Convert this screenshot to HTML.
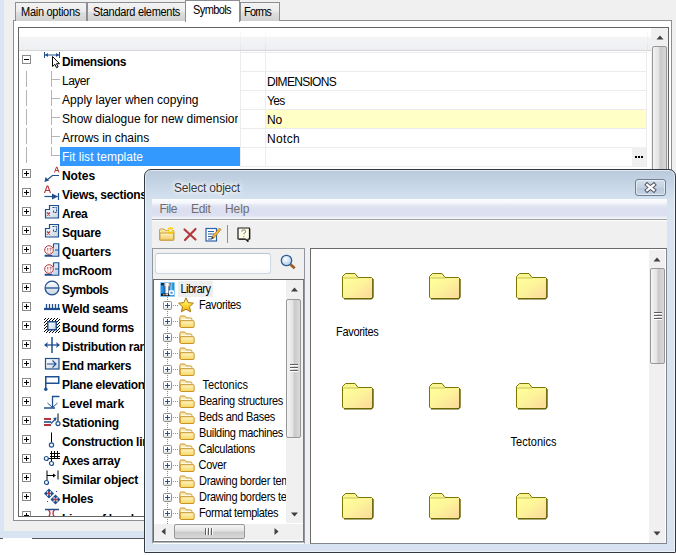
<!DOCTYPE html>
<html>
<head>
<meta charset="utf-8">
<title>Select object</title>
<style>
*{box-sizing:border-box;margin:0;padding:0}
html,body{width:676px;height:555px;overflow:hidden;background:#fff}
body{position:relative;font-family:"Liberation Sans",sans-serif;font-size:12px;color:#000}
.a{position:absolute}
.t{position:absolute;white-space:pre;line-height:16px;height:16px}
svg{position:absolute;overflow:visible}
.tab{position:absolute;top:2px;height:19px;border:1px solid #8c8e94;border-bottom:none;background:linear-gradient(#f3f3f3 0%,#ececec 45%,#dedede 55%,#d2d2d2 100%)}
.tab.sel{top:0;height:22px;background:#fff}
.pm{position:absolute;width:9px;height:9px;border:1px solid #8a8a8a;background:#fff}
.pm:before{content:"";position:absolute;left:1px;top:3px;width:5px;height:1px;background:#000}
.pm.p:after{content:"";position:absolute;left:3px;top:1px;width:1px;height:5px;background:#000}
.xp{position:absolute;width:9px;height:9px;border:1px solid #8f8f8f;border-radius:1.500px;background:linear-gradient(#fff 0%,#fff 55%,#dcdcdc 100%)}
.xp:before{content:"";position:absolute;left:1px;top:3px;width:5px;height:1px;background:#2b4aa0}
.xp:after{content:"";position:absolute;left:3px;top:1px;width:1px;height:5px;background:#2b4aa0}
.dv{position:absolute;width:1px;background-image:linear-gradient(#8c8c8c 50%,transparent 50%);background-size:1px 2px}
.dh{position:absolute;height:1px;background-image:linear-gradient(90deg,#8c8c8c 50%,transparent 50%);background-size:2px 1px}

</style>
</head>
<body>
<div class="a" style="left:0px;top:0px;width:676px;height:538px;background:#f0f0f0"></div>
<div class="a" style="left:0px;top:0px;width:4px;height:538px;background:#dbe5f3"></div>
<div class="a" style="left:0px;top:531px;width:676px;height:7px;background:#d9e4f2"></div>
<div class="a" style="left:0px;top:538px;width:3px;height:1px;background:#5a5a5a"></div>
<div class="a" style="left:32px;top:538px;width:120px;height:1px;background:#5a5a5a"></div>
<div class="a" style="left:13px;top:20px;width:659px;height:501px;border:1px solid #8c8e94;background:#fff"></div>
<div class="tab" style="left:15px;width:72px"></div>
<div class="tab" style="left:87px;width:99px"></div>
<div class="tab" style="left:240px;width:40px"></div>
<div class="tab sel" style="left:185px;width:55px"></div>
<div class="t" style="left:21px;top:4px;font-size:11px;letter-spacing:-0.28px;transform:scaleY(1.08);transform-origin:0 75%;">Main options</div>
<div class="t" style="left:93px;top:4px;font-size:11px;letter-spacing:-0.31px;transform:scaleY(1.08);transform-origin:0 75%;">Standard elements</div>
<div class="t" style="left:193px;top:2px;font-size:11px;letter-spacing:-0.60px;transform:scaleY(1.08);transform-origin:0 75%;">Symbols</div>
<div class="t" style="left:244px;top:4px;font-size:11px;letter-spacing:-0.83px;transform:scaleY(1.08);transform-origin:0 75%;">Forms</div>
<div class="a" style="left:18px;top:27px;width:651px;height:490px;border:1px solid #646464;background:#fff"></div>
<div class="a" style="left:19px;top:28px;width:633px;height:22px;background:linear-gradient(#fff 0%,#fff 38%,#f3f4f6 42%,#eeeff2 100%)"></div>
<div class="a" style="left:19px;top:50px;width:633px;height:1px;background:#d5d5d5"></div>
<div class="a" style="left:240px;top:28px;width:1px;height:22px;background:linear-gradient(#fff,#e2e3e6)"></div>
<div class="a" style="left:265px;top:28px;width:1px;height:22px;background:linear-gradient(#fff,#e2e3e6)"></div>
<div class="a" style="left:647px;top:28px;width:1px;height:22px;background:linear-gradient(#fff,#e2e3e6)"></div>
<div class="a" style="left:240px;top:52px;width:407px;height:1px;background:#ececec"></div>
<div class="a" style="left:240px;top:71px;width:407px;height:1px;background:#ececec"></div>
<div class="a" style="left:240px;top:90px;width:407px;height:1px;background:#ececec"></div>
<div class="a" style="left:240px;top:109px;width:407px;height:1px;background:#ececec"></div>
<div class="a" style="left:240px;top:128px;width:407px;height:1px;background:#ececec"></div>
<div class="a" style="left:240px;top:147px;width:407px;height:1px;background:#ececec"></div>
<div class="a" style="left:240px;top:166px;width:407px;height:1px;background:#ececec"></div>
<div class="a" style="left:240px;top:51px;width:1px;height:116px;background:#ececec"></div>
<div class="a" style="left:265px;top:51px;width:1px;height:116px;background:#ececec"></div>
<div class="a" style="left:646px;top:51px;width:1px;height:116px;background:#ececec"></div>
<div class="a" style="left:266px;top:110px;width:380px;height:18px;background:#ffffc6"></div>
<div class="a" style="left:60px;top:147px;width:180px;height:19px;background:#3399ff"></div>
<div class="a" style="left:632px;top:147px;width:14px;height:19px;background:#f0f0f0"></div>
<div class="a" style="left:635px;top:156px;width:2px;height:2px;background:#000"></div>
<div class="a" style="left:638px;top:156px;width:2px;height:2px;background:#000"></div>
<div class="a" style="left:641px;top:156px;width:2px;height:2px;background:#000"></div>
<div class="a" style="left:651px;top:28px;width:17px;height:488px;background:#f0f0f0"></div>
<svg style="left:652px;top:28px" width="16" height="18" viewBox="0 0 16 18"><path d="M4.500 11.500l3.500-4 3.500 4z" fill="#404040"/></svg>
<div class="a" style="left:652px;top:46px;width:15px;height:480px;border:1px solid #979797;border-radius:2px;background:linear-gradient(90deg,#f3f3f3 0%,#e2e2e2 45%,#c8c8c8 55%,#d8d8d8 100%)"></div>
<div class="a" style="left:26px;top:71px;width:1px;height:16px;background:#b4b4b4"></div>
<div class="a" style="left:51px;top:71px;width:1px;height:16px;background:#b4b4b4"></div>
<div class="a" style="left:51px;top:79px;width:9px;height:1px;background:#b4b4b4"></div>
<div class="a" style="left:26px;top:90px;width:1px;height:16px;background:#b4b4b4"></div>
<div class="a" style="left:51px;top:90px;width:1px;height:16px;background:#b4b4b4"></div>
<div class="a" style="left:51px;top:98px;width:9px;height:1px;background:#b4b4b4"></div>
<div class="a" style="left:26px;top:109px;width:1px;height:16px;background:#b4b4b4"></div>
<div class="a" style="left:51px;top:109px;width:1px;height:16px;background:#b4b4b4"></div>
<div class="a" style="left:51px;top:117px;width:9px;height:1px;background:#b4b4b4"></div>
<div class="a" style="left:26px;top:128px;width:1px;height:16px;background:#b4b4b4"></div>
<div class="a" style="left:51px;top:128px;width:1px;height:16px;background:#b4b4b4"></div>
<div class="a" style="left:51px;top:136px;width:9px;height:1px;background:#b4b4b4"></div>
<div class="a" style="left:26px;top:147px;width:1px;height:16px;background:#b4b4b4"></div>
<div class="a" style="left:51px;top:147px;width:1px;height:9px;background:#b4b4b4"></div>
<div class="a" style="left:51px;top:155px;width:9px;height:1px;background:#b4b4b4"></div>
<div class="a" style="left:19px;top:51px;width:221px;height:465px;overflow:hidden">
<div class="pm" style="left:3px;top:4px"></div>
<div class="t" style="left:43px;top:3px;font-size:12px;font-weight:bold;letter-spacing:-0.40px;">Dimensions</div>
<svg style="left:25px;top:1px" width="17" height="17" viewBox="0 0 17 17"><path d="M0.5 0v6M15.5 0v6M1 3h14" stroke="#1f4f8f" stroke-width="1" fill="none"/><path d="M1 3l3-2v4zM15 3l-3-2v4z" fill="#1f4f8f"/>
<path d="M8.5 4.5v10l2.4-2.2 1.6 3.4 1.6-.8-1.6-3.2h3z" fill="#fff" stroke="#000" stroke-width="1"/></svg>
<div class="t" style="left:43px;top:22px;font-size:12px;letter-spacing:-0.51px;">Layer</div>
<div class="t" style="left:43px;top:41px;font-size:12px;letter-spacing:0.02px;">Apply layer when copying</div>
<div class="t" style="left:43px;top:60px;font-size:12px;letter-spacing:-0.01px;width:176px;overflow:hidden;">Show dialogue for new dimension</div>
<div class="t" style="left:43px;top:79px;font-size:12px;letter-spacing:-0.06px;">Arrows in chains</div>
<div class="t" style="left:43px;top:98px;font-size:12px;letter-spacing:0.02px;color:#fff;">Fit list template</div>
<div class="pm p" style="left:3px;top:118px"></div>
<div class="t" style="left:43px;top:117px;font-size:12px;font-weight:bold;letter-spacing:-0.07px;">Notes</div>
<svg style="left:25px;top:115px" width="17" height="17" viewBox="0 0 17 17"><path d="M10.500 6.500L12.500 1h.5L15 6.500M11.300 4.500h2.900" stroke="#b5333a" stroke-width="1" fill="none"/>
<path d="M15 9.500h-6.500L3 14" stroke="#1f4f8f" stroke-width="1.200" fill="none"/><path d="M0.5 16l1-5 3.6 3.6z" fill="#1f4f8f"/></svg>
<div class="pm p" style="left:3px;top:137px"></div>
<div class="t" style="left:43px;top:136px;font-size:12px;font-weight:bold;letter-spacing:-0.30px;">Views, sections</div>
<svg style="left:25px;top:134px" width="17" height="17" viewBox="0 0 17 17"><path d="M0.5 8L3.1 1h.8L6.5 8M1.5 5.5h4" stroke="#b5333a" stroke-width="1.1" fill="none"/>
<path d="M0.5 11.5h13" stroke="#1f4f8f" stroke-width="1.2" fill="none"/><path d="M14 11.5l-6-3v6z" fill="#1f4f8f"/><path d="M14.5 8v7" stroke="#1f4f8f" stroke-width="1.2"/></svg>
<div class="pm p" style="left:3px;top:156px"></div>
<div class="t" style="left:43px;top:155px;font-size:12px;font-weight:bold;letter-spacing:-0.30px;">Area</div>
<svg style="left:25px;top:153px" width="17" height="17" viewBox="0 0 17 17"><defs><linearGradient id="ga" x1="0" y1="0" x2="1" y2="1"><stop offset="0" stop-color="#fff"/><stop offset="1" stop-color="#c9d6e3"/></linearGradient></defs>
<path d="M1.5 5.5h4v-4h9v12.5h-13z" fill="url(#ga)" stroke="#1f4f8f" stroke-width="1.2"/>
<path d="M3 8.5l3 3M6 8.5l-3 3" stroke="#b5333a" stroke-width="1.1"/>
<path d="M8.5 3.5h4v5h-3v-2" stroke="#1f4f8f" stroke-width="1" fill="none" stroke-dasharray="2 1"/></svg>
<div class="pm p" style="left:3px;top:175px"></div>
<div class="t" style="left:43px;top:174px;font-size:12px;font-weight:bold;letter-spacing:-0.28px;">Square</div>
<svg style="left:25px;top:172px" width="17" height="17" viewBox="0 0 17 17"><defs><linearGradient id="gb" x1="0" y1="0" x2="1" y2="1"><stop offset="0" stop-color="#fff"/><stop offset="1" stop-color="#c9d6e3"/></linearGradient></defs>
<path d="M1.5 5.5h4v-4h9v12.5h-13z" fill="url(#gb)" stroke="#1f4f8f" stroke-width="1.2"/>
<path d="M3 8.5l3 3M6 8.5l-3 3" stroke="#b5333a" stroke-width="1.1"/>
<path d="M8.5 3.5h4v5h-3v-2" stroke="#1f4f8f" stroke-width="1" fill="none" stroke-dasharray="2 1"/></svg>
<div class="pm p" style="left:3px;top:194px"></div>
<div class="t" style="left:43px;top:193px;font-size:12px;font-weight:bold;letter-spacing:-0.13px;">Quarters</div>
<svg style="left:25px;top:191px" width="17" height="17" viewBox="0 0 17 17"><defs><linearGradient id="gq1" x1="0" y1="0" x2="1" y2="1"><stop offset="0" stop-color="#fff"/><stop offset="1" stop-color="#b9cde6"/></linearGradient></defs>
<path d="M9.5 1.75h5.25v12.5h-13.5v-1h7" fill="url(#gq1)" stroke="#1f4f8f" stroke-width="1.2"/><path d="M9.5 1.75v4M11 8h3.5" stroke="#1f4f8f" stroke-width="1.2" fill="none"/>
<circle cx="5" cy="8" r="4.3" fill="#fff" stroke="#b5333a" stroke-width="1"/>
<path d="M3.8 6v2.6M3.8 9.6v.8M5.6 6.4q1.5-.9 1.6.4 0 .8-1 1.4v.5M6.2 9.7v.8" stroke="#b5333a" stroke-width=".9" fill="none"/></svg>
<div class="pm p" style="left:3px;top:213px"></div>
<div class="t" style="left:43px;top:212px;font-size:12px;font-weight:bold;letter-spacing:-0.27px;">mcRoom</div>
<svg style="left:25px;top:210px" width="17" height="17" viewBox="0 0 17 17"><defs><linearGradient id="gq2" x1="0" y1="0" x2="1" y2="1"><stop offset="0" stop-color="#fff"/><stop offset="1" stop-color="#b9cde6"/></linearGradient></defs>
<path d="M9.5 1.75h5.25v12.5h-13.5v-1h7" fill="url(#gq2)" stroke="#1f4f8f" stroke-width="1.2"/><path d="M9.5 1.75v4M11 8h3.5" stroke="#1f4f8f" stroke-width="1.2" fill="none"/>
<circle cx="5" cy="8" r="4.3" fill="#fff" stroke="#b5333a" stroke-width="1"/>
<path d="M3.8 6v2.6M3.8 9.6v.8M5.6 6.4q1.5-.9 1.6.4 0 .8-1 1.4v.5M6.2 9.7v.8" stroke="#b5333a" stroke-width=".9" fill="none"/></svg>
<div class="pm p" style="left:3px;top:232px"></div>
<div class="t" style="left:43px;top:231px;font-size:12px;font-weight:bold;letter-spacing:-0.57px;">Symbols</div>
<svg style="left:25px;top:229px" width="17" height="17" viewBox="0 0 17 17"><defs><linearGradient id="gs" x1="0" y1="0" x2="0" y2="1"><stop offset="0" stop-color="#fff"/><stop offset="1" stop-color="#c5d3e2"/></linearGradient></defs>
<circle cx="8" cy="8" r="6.9" fill="url(#gs)" stroke="#1f4f8f" stroke-width="1.3"/><path d="M1.5 8h13" stroke="#1f4f8f" stroke-width="1.3"/></svg>
<div class="pm p" style="left:3px;top:251px"></div>
<div class="t" style="left:43px;top:250px;font-size:12px;font-weight:bold;letter-spacing:-0.32px;">Weld seams</div>
<svg style="left:25px;top:247px" width="17" height="17" viewBox="0 0 17 17"><path d="M0 11h16" stroke="#1f4f8f" stroke-width="2.2"/><path d="M2.5 6v5M5.5 6v5M8.5 6v5M11.5 6v5M14.5 6v5" stroke="#1f4f8f" stroke-width="1.3"/></svg>
<div class="pm p" style="left:3px;top:270px"></div>
<div class="t" style="left:43px;top:269px;font-size:12px;font-weight:bold;letter-spacing:-0.24px;">Bound forms</div>
<svg style="left:25px;top:266px" width="17" height="17" viewBox="0 0 17 17"><defs><pattern id="ph" width="3" height="3" patternUnits="userSpaceOnUse"><path d="M-1 1l2-2M0 3l3-3M2 4l2-2" stroke="#000" stroke-width="1"/></pattern>
<linearGradient id="gbd" x1="0" y1="0" x2="1" y2="1"><stop offset="0" stop-color="#fff"/><stop offset="1" stop-color="#c5d3e2"/></linearGradient></defs>
<rect x="0" y="1" width="16" height="15" fill="url(#ph)"/><rect x="3.75" y="4.75" width="8.5" height="8" fill="url(#gbd)" stroke="#1f4f8f" stroke-width="1.5"/></svg>
<div class="pm p" style="left:3px;top:289px"></div>
<div class="t" style="left:43px;top:288px;font-size:12px;font-weight:bold;letter-spacing:-0.30px;">Distribution range</div>
<svg style="left:25px;top:286px" width="17" height="17" viewBox="0 0 17 17"><path d="M8 0v16" stroke="#1f4f8f" stroke-width="1.5"/><path d="M1 8h14" stroke="#1f4f8f" stroke-width="1.3"/><path d="M0 8l4-3-1 3 1 3zM16 8l-4-3 1 3-1 3z" fill="#1f4f8f"/></svg>
<div class="pm p" style="left:3px;top:308px"></div>
<div class="t" style="left:43px;top:307px;font-size:12px;font-weight:bold;letter-spacing:-0.34px;">End markers</div>
<svg style="left:25px;top:305px" width="17" height="17" viewBox="0 0 17 17"><defs><linearGradient id="ge" x1="0" y1="0" x2="1" y2="1"><stop offset="0" stop-color="#fff"/><stop offset="1" stop-color="#c9d6e3"/></linearGradient></defs>
<rect x="1.5" y="2.5" width="13.5" height="10.5" fill="url(#ge)" stroke="#1f4f8f" stroke-width="1.2"/><path d="M3 8h9M8.5 4.5l3.5 3.5-3.5 3.5" stroke="#1f4f8f" stroke-width="1.1" fill="none"/></svg>
<div class="pm p" style="left:3px;top:327px"></div>
<div class="t" style="left:43px;top:326px;font-size:12px;font-weight:bold;letter-spacing:-0.30px;">Plane elevation</div>
<svg style="left:25px;top:324px" width="17" height="17" viewBox="0 0 17 17"><path d="M1.75 13v-11.25h13v6.5h-13" stroke="#1f4f8f" stroke-width="1.5" fill="none"/><circle cx="1.8" cy="14.3" r="1.7" fill="#1f4f8f"/></svg>
<div class="pm p" style="left:3px;top:346px"></div>
<div class="t" style="left:43px;top:345px;font-size:12px;font-weight:bold;letter-spacing:-0.07px;">Level mark</div>
<svg style="left:25px;top:343px" width="17" height="17" viewBox="0 0 17 17"><path d="M15.5 2.5h-7v11" stroke="#1f4f8f" stroke-width="1.3" fill="none"/><path d="M3.5 9l5 4.5 5-4.5" stroke="#1f4f8f" stroke-width="1" fill="none"/><path d="M0 14h11" stroke="#1f4f8f" stroke-width="1.5"/></svg>
<div class="pm p" style="left:3px;top:365px"></div>
<div class="t" style="left:43px;top:364px;font-size:12px;font-weight:bold;letter-spacing:-0.17px;">Stationing</div>
<svg style="left:25px;top:362px" width="17" height="17" viewBox="0 0 17 17"><path d="M0 6h7M0 12h7" stroke="#b5333a" stroke-width="2"/><path d="M0 9h7" stroke="#1f4f8f" stroke-width="1.6"/>
<path d="M7 10.5l5-5" stroke="#1f4f8f" stroke-width="1.2"/><path d="M12.5 4.5l-3.5.6 2.9 2.9z" fill="#1f4f8f"/>
<path d="M14 0.5v8" stroke="#000" stroke-width="1"/><circle cx="14" cy="10.6" r="2" fill="#fff" stroke="#1f4f8f" stroke-width="1.2"/></svg>
<div class="pm p" style="left:3px;top:384px"></div>
<div class="t" style="left:43px;top:383px;font-size:12px;font-weight:bold;letter-spacing:-0.30px;">Construction line</div>
<svg style="left:25px;top:381px" width="17" height="17" viewBox="0 0 17 17"><path d="M7.5 0.5v10" stroke="#000" stroke-width="1"/><circle cx="7.5" cy="13" r="2.1" fill="#fff" stroke="#1f4f8f" stroke-width="1.2"/></svg>
<div class="pm p" style="left:3px;top:403px"></div>
<div class="t" style="left:43px;top:402px;font-size:12px;font-weight:bold;letter-spacing:-0.34px;">Axes array</div>
<svg style="left:25px;top:400px" width="17" height="17" viewBox="0 0 17 17"><path d="M7.5 0v8M10.5 0v8M13.5 0v8M6 2.5h10M6 5.5h10M3 7.5h13M7.5 8v3" stroke="#000" stroke-width="1"/>
<circle cx="2.3" cy="7.5" r="2" fill="#fff" stroke="#1f4f8f" stroke-width="1.2"/><circle cx="7.5" cy="12.5" r="2" fill="#fff" stroke="#1f4f8f" stroke-width="1.2"/></svg>
<div class="pm p" style="left:3px;top:422px"></div>
<div class="t" style="left:43px;top:421px;font-size:12px;font-weight:bold;letter-spacing:-0.19px;">Similar object</div>
<svg style="left:25px;top:419px" width="17" height="17" viewBox="0 0 17 17"><path d="M3 0.5v10M14 0.5v9M3 5.5h8" stroke="#000" stroke-width="1"/><path d="M12 5.5l-3-2v4z" fill="#000"/><circle cx="2.5" cy="12.5" r="2" fill="#fff" stroke="#1f4f8f" stroke-width="1.2"/></svg>
<div class="pm p" style="left:3px;top:441px"></div>
<div class="t" style="left:43px;top:440px;font-size:12px;font-weight:bold;letter-spacing:-0.34px;">Holes</div>
<svg style="left:25px;top:438px" width="17" height="17" viewBox="0 0 17 17"><path d="M5 -0.5l5 5-5 5-5-5z" fill="#1f4f8f"/><path d="M11.5 5.5l5 5-5 5-5-5z" fill="#1f4f8f"/>
<path d="M3 2.5l4 4M7 2.5l-4 4M9.5 8.5l4 4M13.5 8.5l-4 4" stroke="#fff" stroke-width="1.2"/><path d="M4 3.5l2 2M6 3.5l-2 2M10.5 9.5l2 2M12.500 9.5l-2 2" stroke="#b5333a" stroke-width="1.5"/>
<rect x="12" y="2" width="1" height="1" fill="#1f4f8f"/><rect x="3" y="12" width="1" height="1" fill="#1f4f8f"/></svg>
<div class="pm p" style="left:3px;top:460px"></div>
<div class="t" style="left:43px;top:460px;font-size:12px;font-weight:bold;letter-spacing:-0.30px;">Lines of level</div>
<svg style="left:25px;top:457px" width="17" height="17" viewBox="0 0 17 17"><path d="M1 1.500h14" stroke="#1f4f8f" stroke-width="1.500"/><path d="M4.5 2q3 3 0 7M10.5 2q-3 3 0 7" stroke="#b5333a" stroke-width="1.3" fill="none"/></svg>
</div>
<div class="t" style="left:267px;top:74px;font-size:12px;letter-spacing:-0.70px;">DIMENSIONS</div>
<div class="t" style="left:267px;top:93px;font-size:12px;letter-spacing:-0.69px;">Yes</div>
<div class="t" style="left:267px;top:112px;font-size:12px;letter-spacing:-0.17px;">No</div>
<div class="t" style="left:267px;top:131px;font-size:12px;letter-spacing:0.33px;">Notch</div>
<div class="a" style="left:144px;top:169px;width:532px;height:384px;border:1px solid #333942;border-radius:7px 7px 1px 1px;background:linear-gradient(#b9c9db 0px,#c6d5e6 14px,#d3e0ee 28px,#d8e4f1 40px,#d7e3f0 100%);box-shadow:inset 0 0 0 1px rgba(255,255,255,.55)"></div>
<div class="t" style="left:174px;top:180px;font-size:12px;letter-spacing:-0.21px;color:#3b3b3b;text-shadow:0 0 6px #fff,0 0 6px #fff,0 0 3px #fff;">Select object</div>
<div class="a" style="left:635px;top:179px;width:31px;height:17px;border:1px solid #6f7f93;border-radius:3px;background:linear-gradient(#d4dfec,#c3d1e2 50%,#b7c7db 51%,#c6d4e4);box-shadow:inset 0 0 0 1px rgba(255,255,255,.5)"></div>
<svg style="left:645px;top:183px" width="11" height="9" viewBox="0 0 11 9"><path d="M2.200 1.800l6.600 5.400M8.800 1.800l-6.600 5.400" stroke="#505662" stroke-width="4.200" stroke-linecap="square"/><path d="M2.200 1.800l6.600 5.400M8.800 1.800l-6.600 5.400" stroke="#fff" stroke-width="2.300" stroke-linecap="square"/></svg>
<div class="a" style="left:152px;top:199px;width:515px;height:345px;background:#f0f0f0"></div>
<div class="a" style="left:152px;top:199px;width:515px;height:20px;background:linear-gradient(#fdfdfe 0%,#f4f6fb 20%,#e4e7f3 32%,#dcdfef 50%,#dde0f0 82%,#f1f2f8 95%,#f6f6fa 100%)"></div>
<div class="t" style="left:159.5px;top:200.5px;font-size:12px;letter-spacing:-0.46px;color:#6d6d6d;">File</div>
<div class="t" style="left:191px;top:200.5px;font-size:12px;letter-spacing:-0.30px;color:#6d6d6d;">Edit</div>
<div class="t" style="left:225px;top:200.5px;font-size:12px;letter-spacing:-0.05px;color:#6d6d6d;">Help</div>
<div class="a" style="left:152px;top:219px;width:515px;height:1px;background:#a0a0a0"></div>
<div class="a" style="left:152px;top:220px;width:515px;height:1px;background:#fff"></div>
<svg style="left:159px;top:227px" width="16" height="14" viewBox="0 0 16 14"><defs><linearGradient id="tf" x1="0" y1="0" x2="0" y2="1"><stop offset="0" stop-color="#fdf3c2"/><stop offset="1" stop-color="#f2cc62"/></linearGradient></defs>
<path d="M.5 12.500v-9.500q0-1 1-1h3.500l1.500 1.500h7.500q1 0 1 1v8q0 .8-.8.8h-13q-.7 0-.7-.8z" fill="#f9e49a" stroke="#c9a24a"/>
<path d="M1 6h13.500v6.500q0 .5-.5.500h-12.500q-.5 0-.5-.5z" fill="url(#tf)" stroke="#c9a24a"/>
<path d="M11.500 0v7M8 3.500h7M9 1l5 5M14 1l-5 5" stroke="#f6c400" stroke-width="1.100"/><circle cx="11.500" cy="3.500" r="1.300" fill="#fffbe0"/></svg>
<svg style="left:183px;top:228px" width="14" height="13" viewBox="0 0 14 13"><path d="M1.500 1.500l11 10M12.500 1l-10.500 11" stroke="#b23a3e" stroke-width="2.200" stroke-linecap="round"/></svg>
<svg style="left:205px;top:227px" width="16" height="15" viewBox="0 0 16 15"><rect x="1" y="1.500" width="10.500" height="12.500" fill="#fff" stroke="#2e62a8" stroke-width="1.200"/>
<path d="M3 4.500h6M3 7h6M3 9.500h5M3 12h4" stroke="#2e62a8" stroke-width="1.100"/>
<path d="M14.500 1l1.500 1.500-7 8.500-2.500 1 .6-2.600z" fill="#f2b632" stroke="#9a6a1a" stroke-width=".6"/><path d="M6.500 12l.6-2.600 1.900 1.600z" fill="#333"/></svg>
<div class="a" style="left:227px;top:225px;width:1px;height:18px;background:#8e8e8e"></div>
<svg style="left:237px;top:227px" width="14" height="15" viewBox="0 0 14 15"><path d="M1 1h11.500v11h-1.500v2.500l-2.500-2.500h-7.500z" fill="#fffde6" stroke="#1a1a1a" stroke-width="1.200" stroke-linejoin="round"/><path d="M12.800 2v10.300M2 12.300h6" stroke="#1a1a1a" stroke-width="1"/>
<path d="M4.800 4.800q0-1.900 2-1.900 1.900 0 1.900 1.500 0 1-1.200 1.700-.7.500-.7 1.300M6.800 9v1.200" stroke="#9a9a9a" stroke-width="1.100" fill="none"/></svg>
<div class="a" style="left:152px;top:248px;width:153px;height:296px;border:1px solid #92979f;border-bottom-color:#fff;background:#f0f0f0"></div>
<div class="a" style="left:155px;top:253px;width:116px;height:21px;border:1px solid #cfd8e3;border-top-color:#b9c4d2;border-radius:3px;background:linear-gradient(#fff,#fff 70%,#f6f8fb)"></div>
<svg style="left:280px;top:254px" width="17" height="17" viewBox="0 0 17 17"><defs><radialGradient id="mg" cx=".4" cy=".35" r=".7"><stop offset="0" stop-color="#fff"/><stop offset="1" stop-color="#a9c9ea"/></radialGradient></defs>
<path d="M10.500 10.500l4.200 3.800" stroke="#a45c1e" stroke-width="2.800" stroke-linecap="butt"/><circle cx="6.500" cy="6.500" r="5.200" fill="url(#mg)" stroke="#2f5f92" stroke-width="1.300"/></svg>
<div class="a" style="left:153px;top:279px;width:151px;height:264px;background:#b4b8be"></div>
<div class="a" style="left:153px;top:279px;width:151px;height:263px;border:1px solid #767c86;border-top-color:#6b6b6b;border-left-color:#6b6b6b;background:#fff"></div>
<div class="a" style="left:286px;top:280px;width:17px;height:243px;background:#f0f0f0"></div>
<svg style="left:286px;top:281px" width="17" height="17" viewBox="0 0 17 17"><path d="M5 10.500l3.500-4 3.500 4z" fill="#404040"/></svg>
<svg style="left:286px;top:506px" width="17" height="17" viewBox="0 0 17 17"><path d="M5 6.500l3.500 4 3.500-4z" fill="#404040"/></svg>
<div class="a" style="left:286px;top:299px;width:15px;height:139px;border:1px solid #979797;border-radius:2px;background:linear-gradient(90deg,#f4f4f4 0%,#e3e3e3 45%,#cacaca 55%,#d9d9d9 100%)"></div>
<div class="a" style="left:290px;top:364px;width:8px;height:1px;background:#5e5e5e"></div>
<div class="a" style="left:290px;top:365px;width:8px;height:1px;background:#fff"></div>
<div class="a" style="left:290px;top:367px;width:8px;height:1px;background:#5e5e5e"></div>
<div class="a" style="left:290px;top:368px;width:8px;height:1px;background:#fff"></div>
<div class="a" style="left:290px;top:370px;width:8px;height:1px;background:#5e5e5e"></div>
<div class="a" style="left:290px;top:371px;width:8px;height:1px;background:#fff"></div>
<div class="a" style="left:154px;top:524px;width:149px;height:16px;background:#f0f0f0"></div>
<svg style="left:155.3px;top:522.7px" width="17" height="17" viewBox="0 0 17 17"><path d="M10.500 5l-4 3.500 4 3.500z" fill="#404040"/></svg>
<svg style="left:267.5px;top:522.7px" width="17" height="17" viewBox="0 0 17 17"><path d="M6.500 5l4 3.500-4 3.500z" fill="#404040"/></svg>
<div class="a" style="left:174px;top:524px;width:71px;height:15px;border:1px solid #979797;border-radius:2px;background:linear-gradient(#f4f4f4 0%,#e3e3e3 45%,#cacaca 55%,#d9d9d9 100%)"></div>
<div class="a" style="left:205px;top:528px;width:1px;height:7px;background:#5e5e5e"></div>
<div class="a" style="left:206px;top:528px;width:1px;height:7px;background:#fff"></div>
<div class="a" style="left:208px;top:528px;width:1px;height:7px;background:#5e5e5e"></div>
<div class="a" style="left:209px;top:528px;width:1px;height:7px;background:#fff"></div>
<div class="a" style="left:211px;top:528px;width:1px;height:7px;background:#5e5e5e"></div>
<div class="a" style="left:212px;top:528px;width:1px;height:7px;background:#fff"></div>
<div class="a" style="left:154px;top:280px;width:132px;height:244px;overflow:hidden">
<svg style="left:6px;top:2px" width="15" height="15" viewBox="0 0 15 15"><defs><linearGradient id="lc" x1="0" y1="0" x2="1" y2="0"><stop offset="0" stop-color="#4a4a4a"/><stop offset=".35" stop-color="#f4f4f4"/><stop offset=".7" stop-color="#fff"/><stop offset="1" stop-color="#8a8a8a"/></linearGradient></defs>
<rect x="0" y="0" width="15" height="15" fill="#1b78d4"/>
<rect x="1" y="1" width="10" height="2.500" fill="#16283a"/>
<rect x="1" y="3.500" width="2" height="8" fill="#2a95e6"/>
<rect x="3.500" y="1" width="6.500" height="3.500" rx="1" fill="url(#lc)"/>
<rect x="4.700" y="4" width="4" height="7.500" fill="url(#lc)"/>
<rect x="1" y="11.500" width="9" height="2.800" fill="#1c1c1c"/><rect x="3" y="12" width="1.500" height="1.500" fill="#9a9a9a"/><rect x="5.500" y="11.700" width="2.500" height="1.500" fill="#d8d8d8"/>
<rect x="10.600" y="1" width="1.100" height="8" fill="#fff"/><rect x="11.700" y="1" width="2.500" height="8" fill="#138a9a"/><rect x="12.300" y="1" width="1.100" height="8" fill="#3aa6f0"/>
<rect x="9" y="8.300" width="5" height="5" rx="1" fill="#fff"/><rect x="10.500" y="9.800" width="2" height="2" fill="#2a8cf0"/>
<rect x=".4" y=".4" width="14.200" height="14.200" fill="none" stroke="#a6dbff" stroke-width=".8"/></svg>
<div class="a" style="left:24px;top:1px;width:35px;height:16px;background:#eeeeee"></div>
<div class="t" style="left:26.5px;top:1px;font-size:11px;letter-spacing:-0.52px;transform:scaleY(1.12);transform-origin:0 75%;">Library</div>
<div class="dv" style="left:13px;top:17px;height:230px"></div>
<div class="dh" style="left:19px;top:25px;width:6px"></div>
<div class="xp" style="left:9px;top:21px"></div>
<svg style="left:24px;top:16.5px" width="16" height="15" viewBox="0 0 16 15"><defs><linearGradient id="st" x1="0" y1="0" x2="0" y2="1"><stop offset="0" stop-color="#fffbd0"/><stop offset=".45" stop-color="#ffe23a"/><stop offset="1" stop-color="#eea412"/></linearGradient></defs>
<path d="M8 .8l2.200 4.800 5.200.6-3.900 3.500 1.100 5.100-4.600-2.600-4.600 2.600 1.100-5.100-3.900-3.500 5.200-.6z" fill="url(#st)" stroke="#a67a18" stroke-width="1" stroke-linejoin="round"/></svg>
<div class="t" style="left:45px;top:17px;font-size:11px;letter-spacing:-0.36px;transform:scaleY(1.12);transform-origin:0 75%;">Favorites</div>
<div class="dh" style="left:19px;top:41px;width:6px"></div>
<div class="xp" style="left:9px;top:37px"></div>
<svg style="left:25px;top:34.5px" width="16" height="14" viewBox="0 0 16 14"><defs><linearGradient id="sf1" x1="0" y1="0" x2="0" y2="1"><stop offset="0" stop-color="#fff6c4"/><stop offset="1" stop-color="#f8d660"/></linearGradient></defs>
<path d="M.8 11.500v-9q0-1.500 1.500-1.500h3q.9 0 1.500.9l.8 1.100h4.400q.800 0 .800.800v8z" fill="#fbe8a4" stroke="#c9922a" stroke-width="1"/>
<path d="M2.500 3.800h9.800v2.500h-9.800z" fill="#fffdf2"/>
<path d="M1.300 5.700h12.900q.900 0 .900.900v5q0 .900-.900.900h-12q-.900 0-.900-.900z" fill="url(#sf1)" stroke="#c9922a" stroke-width="1"/></svg>
<div class="dh" style="left:19px;top:57px;width:6px"></div>
<div class="xp" style="left:9px;top:53px"></div>
<svg style="left:25px;top:50.5px" width="16" height="14" viewBox="0 0 16 14"><defs><linearGradient id="sf2" x1="0" y1="0" x2="0" y2="1"><stop offset="0" stop-color="#fff6c4"/><stop offset="1" stop-color="#f8d660"/></linearGradient></defs>
<path d="M.8 11.500v-9q0-1.500 1.500-1.500h3q.9 0 1.500.9l.8 1.100h4.400q.800 0 .800.800v8z" fill="#fbe8a4" stroke="#c9922a" stroke-width="1"/>
<path d="M2.500 3.800h9.800v2.500h-9.800z" fill="#fffdf2"/>
<path d="M1.300 5.700h12.900q.900 0 .900.900v5q0 .900-.900.900h-12q-.900 0-.900-.900z" fill="url(#sf2)" stroke="#c9922a" stroke-width="1"/></svg>
<div class="dh" style="left:19px;top:73px;width:6px"></div>
<div class="xp" style="left:9px;top:69px"></div>
<svg style="left:25px;top:66.5px" width="16" height="14" viewBox="0 0 16 14"><defs><linearGradient id="sf3" x1="0" y1="0" x2="0" y2="1"><stop offset="0" stop-color="#fff6c4"/><stop offset="1" stop-color="#f8d660"/></linearGradient></defs>
<path d="M.8 11.500v-9q0-1.500 1.500-1.500h3q.9 0 1.500.9l.8 1.100h4.400q.800 0 .800.800v8z" fill="#fbe8a4" stroke="#c9922a" stroke-width="1"/>
<path d="M2.500 3.800h9.800v2.500h-9.800z" fill="#fffdf2"/>
<path d="M1.300 5.700h12.900q.900 0 .900.900v5q0 .900-.900.900h-12q-.900 0-.900-.900z" fill="url(#sf3)" stroke="#c9922a" stroke-width="1"/></svg>
<div class="dh" style="left:19px;top:89px;width:6px"></div>
<div class="xp" style="left:9px;top:85px"></div>
<svg style="left:25px;top:82.5px" width="16" height="14" viewBox="0 0 16 14"><defs><linearGradient id="sf4" x1="0" y1="0" x2="0" y2="1"><stop offset="0" stop-color="#fff6c4"/><stop offset="1" stop-color="#f8d660"/></linearGradient></defs>
<path d="M.8 11.500v-9q0-1.500 1.500-1.500h3q.9 0 1.500.9l.8 1.100h4.400q.800 0 .800.800v8z" fill="#fbe8a4" stroke="#c9922a" stroke-width="1"/>
<path d="M2.500 3.800h9.800v2.500h-9.800z" fill="#fffdf2"/>
<path d="M1.300 5.700h12.900q.900 0 .900.900v5q0 .900-.900.900h-12q-.900 0-.900-.900z" fill="url(#sf4)" stroke="#c9922a" stroke-width="1"/></svg>
<div class="dh" style="left:19px;top:105px;width:6px"></div>
<div class="xp" style="left:9px;top:101px"></div>
<svg style="left:25px;top:98.5px" width="16" height="14" viewBox="0 0 16 14"><defs><linearGradient id="sf5" x1="0" y1="0" x2="0" y2="1"><stop offset="0" stop-color="#fff6c4"/><stop offset="1" stop-color="#f8d660"/></linearGradient></defs>
<path d="M.8 11.500v-9q0-1.500 1.500-1.500h3q.9 0 1.500.9l.8 1.100h4.400q.800 0 .800.800v8z" fill="#fbe8a4" stroke="#c9922a" stroke-width="1"/>
<path d="M2.500 3.800h9.800v2.500h-9.800z" fill="#fffdf2"/>
<path d="M1.300 5.700h12.900q.900 0 .900.900v5q0 .900-.900.900h-12q-.900 0-.900-.900z" fill="url(#sf5)" stroke="#c9922a" stroke-width="1"/></svg>
<div class="t" style="left:48.5px;top:97px;font-size:11px;letter-spacing:-0.04px;transform:scaleY(1.12);transform-origin:0 75%;">Tectonics</div>
<div class="dh" style="left:19px;top:121px;width:6px"></div>
<div class="xp" style="left:9px;top:117px"></div>
<svg style="left:25px;top:114.5px" width="16" height="14" viewBox="0 0 16 14"><defs><linearGradient id="sf6" x1="0" y1="0" x2="0" y2="1"><stop offset="0" stop-color="#fff6c4"/><stop offset="1" stop-color="#f8d660"/></linearGradient></defs>
<path d="M.8 11.500v-9q0-1.500 1.500-1.500h3q.9 0 1.500.9l.8 1.100h4.400q.800 0 .800.800v8z" fill="#fbe8a4" stroke="#c9922a" stroke-width="1"/>
<path d="M2.500 3.800h9.800v2.500h-9.800z" fill="#fffdf2"/>
<path d="M1.300 5.700h12.900q.900 0 .900.900v5q0 .900-.900.900h-12q-.900 0-.900-.900z" fill="url(#sf6)" stroke="#c9922a" stroke-width="1"/></svg>
<div class="t" style="left:45px;top:113px;font-size:11px;letter-spacing:-0.29px;transform:scaleY(1.12);transform-origin:0 75%;">Bearing structures</div>
<div class="dh" style="left:19px;top:137px;width:6px"></div>
<div class="xp" style="left:9px;top:133px"></div>
<svg style="left:25px;top:130.5px" width="16" height="14" viewBox="0 0 16 14"><defs><linearGradient id="sf7" x1="0" y1="0" x2="0" y2="1"><stop offset="0" stop-color="#fff6c4"/><stop offset="1" stop-color="#f8d660"/></linearGradient></defs>
<path d="M.8 11.500v-9q0-1.500 1.500-1.500h3q.9 0 1.500.9l.8 1.100h4.400q.800 0 .800.800v8z" fill="#fbe8a4" stroke="#c9922a" stroke-width="1"/>
<path d="M2.500 3.800h9.800v2.500h-9.800z" fill="#fffdf2"/>
<path d="M1.300 5.700h12.900q.900 0 .900.900v5q0 .900-.900.900h-12q-.900 0-.900-.900z" fill="url(#sf7)" stroke="#c9922a" stroke-width="1"/></svg>
<div class="t" style="left:45px;top:129px;font-size:11px;letter-spacing:-0.29px;transform:scaleY(1.12);transform-origin:0 75%;">Beds and Bases</div>
<div class="dh" style="left:19px;top:153px;width:6px"></div>
<div class="xp" style="left:9px;top:149px"></div>
<svg style="left:25px;top:146.5px" width="16" height="14" viewBox="0 0 16 14"><defs><linearGradient id="sf8" x1="0" y1="0" x2="0" y2="1"><stop offset="0" stop-color="#fff6c4"/><stop offset="1" stop-color="#f8d660"/></linearGradient></defs>
<path d="M.8 11.500v-9q0-1.500 1.500-1.500h3q.9 0 1.500.9l.8 1.100h4.400q.800 0 .800.800v8z" fill="#fbe8a4" stroke="#c9922a" stroke-width="1"/>
<path d="M2.500 3.800h9.800v2.500h-9.800z" fill="#fffdf2"/>
<path d="M1.300 5.700h12.900q.900 0 .900.900v5q0 .900-.900.900h-12q-.900 0-.900-.900z" fill="url(#sf8)" stroke="#c9922a" stroke-width="1"/></svg>
<div class="t" style="left:45px;top:145px;font-size:11px;letter-spacing:-0.31px;transform:scaleY(1.12);transform-origin:0 75%;">Building machines</div>
<div class="dh" style="left:19px;top:169px;width:6px"></div>
<div class="xp" style="left:9px;top:165px"></div>
<svg style="left:25px;top:162.5px" width="16" height="14" viewBox="0 0 16 14"><defs><linearGradient id="sf9" x1="0" y1="0" x2="0" y2="1"><stop offset="0" stop-color="#fff6c4"/><stop offset="1" stop-color="#f8d660"/></linearGradient></defs>
<path d="M.8 11.500v-9q0-1.500 1.500-1.500h3q.9 0 1.500.9l.8 1.100h4.400q.800 0 .800.800v8z" fill="#fbe8a4" stroke="#c9922a" stroke-width="1"/>
<path d="M2.500 3.800h9.800v2.500h-9.800z" fill="#fffdf2"/>
<path d="M1.300 5.700h12.900q.900 0 .900.900v5q0 .900-.900.900h-12q-.900 0-.900-.900z" fill="url(#sf9)" stroke="#c9922a" stroke-width="1"/></svg>
<div class="t" style="left:44.5px;top:161px;font-size:11px;letter-spacing:-0.29px;transform:scaleY(1.12);transform-origin:0 75%;">Calculations</div>
<div class="dh" style="left:19px;top:185px;width:6px"></div>
<div class="xp" style="left:9px;top:181px"></div>
<svg style="left:25px;top:178.5px" width="16" height="14" viewBox="0 0 16 14"><defs><linearGradient id="sf10" x1="0" y1="0" x2="0" y2="1"><stop offset="0" stop-color="#fff6c4"/><stop offset="1" stop-color="#f8d660"/></linearGradient></defs>
<path d="M.8 11.500v-9q0-1.500 1.500-1.500h3q.9 0 1.500.9l.8 1.100h4.400q.800 0 .800.800v8z" fill="#fbe8a4" stroke="#c9922a" stroke-width="1"/>
<path d="M2.500 3.800h9.800v2.500h-9.800z" fill="#fffdf2"/>
<path d="M1.300 5.700h12.900q.900 0 .900.900v5q0 .900-.900.900h-12q-.900 0-.900-.900z" fill="url(#sf10)" stroke="#c9922a" stroke-width="1"/></svg>
<div class="t" style="left:44.5px;top:177px;font-size:11px;letter-spacing:-0.27px;transform:scaleY(1.12);transform-origin:0 75%;">Cover</div>
<div class="dh" style="left:19px;top:201px;width:6px"></div>
<div class="xp" style="left:9px;top:197px"></div>
<svg style="left:25px;top:194.5px" width="16" height="14" viewBox="0 0 16 14"><defs><linearGradient id="sf11" x1="0" y1="0" x2="0" y2="1"><stop offset="0" stop-color="#fff6c4"/><stop offset="1" stop-color="#f8d660"/></linearGradient></defs>
<path d="M.8 11.500v-9q0-1.500 1.500-1.500h3q.9 0 1.500.9l.8 1.100h4.400q.800 0 .800.800v8z" fill="#fbe8a4" stroke="#c9922a" stroke-width="1"/>
<path d="M2.500 3.800h9.800v2.500h-9.800z" fill="#fffdf2"/>
<path d="M1.300 5.700h12.900q.900 0 .900.900v5q0 .900-.900.900h-12q-.900 0-.900-.900z" fill="url(#sf11)" stroke="#c9922a" stroke-width="1"/></svg>
<div class="t" style="left:45px;top:193px;font-size:11px;letter-spacing:-0.30px;transform:scaleY(1.12);transform-origin:0 75%;">Drawing border templates</div>
<div class="dh" style="left:19px;top:217px;width:6px"></div>
<div class="xp" style="left:9px;top:213px"></div>
<svg style="left:25px;top:210.5px" width="16" height="14" viewBox="0 0 16 14"><defs><linearGradient id="sf12" x1="0" y1="0" x2="0" y2="1"><stop offset="0" stop-color="#fff6c4"/><stop offset="1" stop-color="#f8d660"/></linearGradient></defs>
<path d="M.8 11.500v-9q0-1.500 1.500-1.500h3q.9 0 1.500.9l.8 1.100h4.400q.800 0 .800.800v8z" fill="#fbe8a4" stroke="#c9922a" stroke-width="1"/>
<path d="M2.500 3.800h9.800v2.500h-9.800z" fill="#fffdf2"/>
<path d="M1.300 5.700h12.900q.900 0 .900.900v5q0 .900-.900.900h-12q-.900 0-.900-.900z" fill="url(#sf12)" stroke="#c9922a" stroke-width="1"/></svg>
<div class="t" style="left:45px;top:209px;font-size:11px;letter-spacing:-0.30px;transform:scaleY(1.12);transform-origin:0 75%;">Drawing borders templates</div>
<div class="dh" style="left:19px;top:233px;width:6px"></div>
<div class="xp" style="left:9px;top:229px"></div>
<svg style="left:25px;top:226.5px" width="16" height="14" viewBox="0 0 16 14"><defs><linearGradient id="sf13" x1="0" y1="0" x2="0" y2="1"><stop offset="0" stop-color="#fff6c4"/><stop offset="1" stop-color="#f8d660"/></linearGradient></defs>
<path d="M.8 11.500v-9q0-1.500 1.500-1.500h3q.9 0 1.500.9l.8 1.100h4.400q.800 0 .800.800v8z" fill="#fbe8a4" stroke="#c9922a" stroke-width="1"/>
<path d="M2.500 3.800h9.800v2.500h-9.800z" fill="#fffdf2"/>
<path d="M1.300 5.700h12.900q.900 0 .900.900v5q0 .900-.900.900h-12q-.900 0-.900-.900z" fill="url(#sf13)" stroke="#c9922a" stroke-width="1"/></svg>
<div class="t" style="left:45px;top:225px;font-size:11px;letter-spacing:-0.41px;transform:scaleY(1.12);transform-origin:0 75%;">Format templates</div>
</div>
<div class="a" style="left:310px;top:248px;width:357px;height:296px;border:1px solid #828790;border-top-color:#6b6b6b;border-left-color:#6b6b6b;background:#fff"></div>
<div class="a" style="left:649px;top:250px;width:16px;height:293px;background:#f0f0f0"></div>
<svg style="left:649px;top:251px" width="17" height="17" viewBox="0 0 17 17"><path d="M4.500 10.500l3.500-4 3.500 4z" fill="#404040"/></svg>
<svg style="left:649px;top:525px" width="17" height="17" viewBox="0 0 17 17"><path d="M4.500 6.500l3.500 4 3.500-4z" fill="#404040"/></svg>
<div class="a" style="left:650px;top:268px;width:15px;height:96px;border:1px solid #979797;border-radius:2px;background:linear-gradient(90deg,#f4f4f4 0%,#e3e3e3 45%,#cacaca 55%,#d9d9d9 100%)"></div>
<div class="a" style="left:654px;top:312px;width:8px;height:1px;background:#5e5e5e"></div>
<div class="a" style="left:654px;top:313px;width:8px;height:1px;background:#fff"></div>
<div class="a" style="left:654px;top:315px;width:8px;height:1px;background:#5e5e5e"></div>
<div class="a" style="left:654px;top:316px;width:8px;height:1px;background:#fff"></div>
<div class="a" style="left:654px;top:318px;width:8px;height:1px;background:#5e5e5e"></div>
<div class="a" style="left:654px;top:319px;width:8px;height:1px;background:#fff"></div>
<svg style="left:341px;top:272px" width="33" height="28" viewBox="0 0 33 28"><defs><linearGradient id="bf0" x1="0" y1="0" x2="1" y2="1"><stop offset="0" stop-color="#ffff99"/><stop offset=".45" stop-color="#fdf49a"/><stop offset="1" stop-color="#fbd79c"/></linearGradient></defs>
<path d="M1.5 25V4.5L4.5 1.5h9.5l3 4h13.5l1.500 1.500v18l-1.500 1.500H3z" fill="#f9f590" stroke="#7a7600" stroke-width="1" stroke-linejoin="round"/>
<path d="M2.200 6.600h28.300l.9 1v17l-1 1.200H3.200l-1-1.200z" fill="url(#bf0)"/>
<path d="M2.500 6h14.5" stroke="#c9c45a" stroke-width="1"/>
<path d="M31.800 7v18.500l-1.500 1.500H3" stroke="#5a5600" stroke-width="1.2" fill="none"/></svg>
<svg style="left:428px;top:272px" width="33" height="28" viewBox="0 0 33 28"><defs><linearGradient id="bf1" x1="0" y1="0" x2="1" y2="1"><stop offset="0" stop-color="#ffff99"/><stop offset=".45" stop-color="#fdf49a"/><stop offset="1" stop-color="#fbd79c"/></linearGradient></defs>
<path d="M1.5 25V4.5L4.5 1.5h9.5l3 4h13.5l1.500 1.500v18l-1.500 1.500H3z" fill="#f9f590" stroke="#7a7600" stroke-width="1" stroke-linejoin="round"/>
<path d="M2.200 6.600h28.300l.9 1v17l-1 1.200H3.200l-1-1.200z" fill="url(#bf1)"/>
<path d="M2.500 6h14.5" stroke="#c9c45a" stroke-width="1"/>
<path d="M31.800 7v18.500l-1.500 1.500H3" stroke="#5a5600" stroke-width="1.2" fill="none"/></svg>
<svg style="left:515px;top:272px" width="33" height="28" viewBox="0 0 33 28"><defs><linearGradient id="bf2" x1="0" y1="0" x2="1" y2="1"><stop offset="0" stop-color="#ffff99"/><stop offset=".45" stop-color="#fdf49a"/><stop offset="1" stop-color="#fbd79c"/></linearGradient></defs>
<path d="M1.5 25V4.5L4.5 1.5h9.5l3 4h13.5l1.500 1.500v18l-1.500 1.500H3z" fill="#f9f590" stroke="#7a7600" stroke-width="1" stroke-linejoin="round"/>
<path d="M2.200 6.600h28.300l.9 1v17l-1 1.200H3.200l-1-1.200z" fill="url(#bf2)"/>
<path d="M2.500 6h14.5" stroke="#c9c45a" stroke-width="1"/>
<path d="M31.800 7v18.500l-1.500 1.500H3" stroke="#5a5600" stroke-width="1.2" fill="none"/></svg>
<svg style="left:341px;top:382px" width="33" height="28" viewBox="0 0 33 28"><defs><linearGradient id="bf3" x1="0" y1="0" x2="1" y2="1"><stop offset="0" stop-color="#ffff99"/><stop offset=".45" stop-color="#fdf49a"/><stop offset="1" stop-color="#fbd79c"/></linearGradient></defs>
<path d="M1.5 25V4.5L4.5 1.5h9.5l3 4h13.5l1.500 1.500v18l-1.500 1.500H3z" fill="#f9f590" stroke="#7a7600" stroke-width="1" stroke-linejoin="round"/>
<path d="M2.200 6.600h28.300l.9 1v17l-1 1.200H3.200l-1-1.200z" fill="url(#bf3)"/>
<path d="M2.500 6h14.5" stroke="#c9c45a" stroke-width="1"/>
<path d="M31.800 7v18.500l-1.500 1.500H3" stroke="#5a5600" stroke-width="1.2" fill="none"/></svg>
<svg style="left:428px;top:382px" width="33" height="28" viewBox="0 0 33 28"><defs><linearGradient id="bf4" x1="0" y1="0" x2="1" y2="1"><stop offset="0" stop-color="#ffff99"/><stop offset=".45" stop-color="#fdf49a"/><stop offset="1" stop-color="#fbd79c"/></linearGradient></defs>
<path d="M1.5 25V4.5L4.5 1.5h9.5l3 4h13.5l1.500 1.500v18l-1.500 1.500H3z" fill="#f9f590" stroke="#7a7600" stroke-width="1" stroke-linejoin="round"/>
<path d="M2.200 6.600h28.300l.9 1v17l-1 1.200H3.200l-1-1.200z" fill="url(#bf4)"/>
<path d="M2.500 6h14.5" stroke="#c9c45a" stroke-width="1"/>
<path d="M31.800 7v18.500l-1.500 1.500H3" stroke="#5a5600" stroke-width="1.2" fill="none"/></svg>
<svg style="left:515px;top:382px" width="33" height="28" viewBox="0 0 33 28"><defs><linearGradient id="bf5" x1="0" y1="0" x2="1" y2="1"><stop offset="0" stop-color="#ffff99"/><stop offset=".45" stop-color="#fdf49a"/><stop offset="1" stop-color="#fbd79c"/></linearGradient></defs>
<path d="M1.5 25V4.5L4.5 1.5h9.5l3 4h13.5l1.500 1.500v18l-1.500 1.500H3z" fill="#f9f590" stroke="#7a7600" stroke-width="1" stroke-linejoin="round"/>
<path d="M2.200 6.600h28.300l.9 1v17l-1 1.200H3.200l-1-1.200z" fill="url(#bf5)"/>
<path d="M2.500 6h14.5" stroke="#c9c45a" stroke-width="1"/>
<path d="M31.800 7v18.500l-1.500 1.500H3" stroke="#5a5600" stroke-width="1.2" fill="none"/></svg>
<svg style="left:341px;top:492px" width="33" height="28" viewBox="0 0 33 28"><defs><linearGradient id="bf6" x1="0" y1="0" x2="1" y2="1"><stop offset="0" stop-color="#ffff99"/><stop offset=".45" stop-color="#fdf49a"/><stop offset="1" stop-color="#fbd79c"/></linearGradient></defs>
<path d="M1.5 25V4.5L4.5 1.5h9.5l3 4h13.5l1.500 1.500v18l-1.500 1.500H3z" fill="#f9f590" stroke="#7a7600" stroke-width="1" stroke-linejoin="round"/>
<path d="M2.200 6.600h28.300l.9 1v17l-1 1.200H3.200l-1-1.200z" fill="url(#bf6)"/>
<path d="M2.500 6h14.5" stroke="#c9c45a" stroke-width="1"/>
<path d="M31.800 7v18.500l-1.500 1.500H3" stroke="#5a5600" stroke-width="1.2" fill="none"/></svg>
<svg style="left:428px;top:492px" width="33" height="28" viewBox="0 0 33 28"><defs><linearGradient id="bf7" x1="0" y1="0" x2="1" y2="1"><stop offset="0" stop-color="#ffff99"/><stop offset=".45" stop-color="#fdf49a"/><stop offset="1" stop-color="#fbd79c"/></linearGradient></defs>
<path d="M1.5 25V4.5L4.5 1.5h9.5l3 4h13.5l1.500 1.500v18l-1.500 1.500H3z" fill="#f9f590" stroke="#7a7600" stroke-width="1" stroke-linejoin="round"/>
<path d="M2.200 6.600h28.300l.9 1v17l-1 1.200H3.200l-1-1.200z" fill="url(#bf7)"/>
<path d="M2.500 6h14.5" stroke="#c9c45a" stroke-width="1"/>
<path d="M31.800 7v18.500l-1.500 1.500H3" stroke="#5a5600" stroke-width="1.2" fill="none"/></svg>
<svg style="left:515px;top:492px" width="33" height="28" viewBox="0 0 33 28"><defs><linearGradient id="bf8" x1="0" y1="0" x2="1" y2="1"><stop offset="0" stop-color="#ffff99"/><stop offset=".45" stop-color="#fdf49a"/><stop offset="1" stop-color="#fbd79c"/></linearGradient></defs>
<path d="M1.5 25V4.5L4.5 1.5h9.5l3 4h13.5l1.500 1.500v18l-1.500 1.500H3z" fill="#f9f590" stroke="#7a7600" stroke-width="1" stroke-linejoin="round"/>
<path d="M2.200 6.600h28.300l.9 1v17l-1 1.200H3.200l-1-1.200z" fill="url(#bf8)"/>
<path d="M2.500 6h14.5" stroke="#c9c45a" stroke-width="1"/>
<path d="M31.800 7v18.500l-1.500 1.500H3" stroke="#5a5600" stroke-width="1.2" fill="none"/></svg>
<div class="t" style="left:336px;top:324px;font-size:11px;letter-spacing:-0.31px;transform:scaleY(1.12);transform-origin:0 75%;">Favorites</div>
<div class="t" style="left:510.5px;top:434px;font-size:11px;letter-spacing:0.02px;transform:scaleY(1.12);transform-origin:0 75%;">Tectonics</div>
</body>
</html>
